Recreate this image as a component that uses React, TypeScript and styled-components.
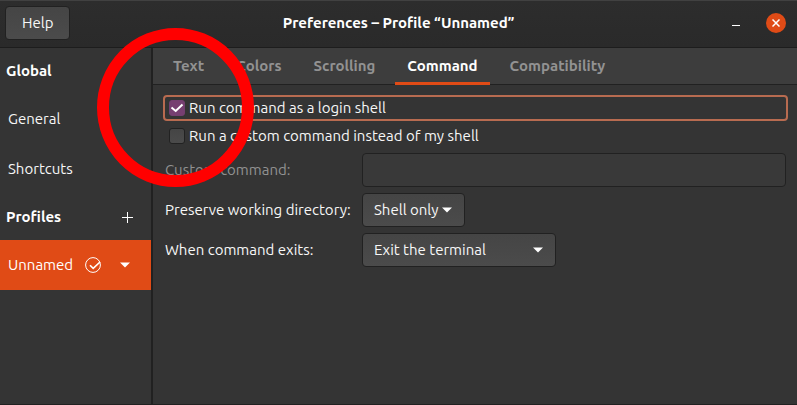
import React, { useState } from "react";
import styled, { createGlobalStyle, css } from "styled-components";

const GlobalStyle = createGlobalStyle`
  *, *::before, *::after { box-sizing: border-box; }
  html, body, #root { height: 100%; }
  body { margin: 0; background: #343434; }
  button, input, select { font: inherit; color: inherit; margin: 0; }
`;

const orange = "#e04b16";
const edge = "#212121";

const Window = styled.div`
  position: relative;
  display: flex;
  flex-direction: column;
  min-height: 100%;
  overflow: hidden;
  color: #f7f7f7;
  background: #343434;
  border-bottom: 1px solid ${edge};
  font: 15px/20px Ubuntu, "Noto Sans", sans-serif;
  white-space: nowrap;
`;

const TitleBar = styled.header`
  display: grid;
  grid-template-columns: 1fr auto 1fr;
  align-items: center;
  height: 48px;
  padding: 0 5px 2px;
  background: linear-gradient(#2d2d2d, #2a2a2a);
  border-top: 1px solid #414141;
  border-bottom: 1px solid #1d1d1d;
`;

const HelpButton = styled.button`
  justify-self: start;
  height: 34px;
  padding: 0 16px;
  border: 1px solid ${edge};
  border-radius: 4px;
  background: linear-gradient(#454545, #4b4b4b);
`;

const Title = styled.h1`
  margin: 0;
  font-size: 15px;
  font-weight: 700;
  color: #ffffff;
`;

const WindowControls = styled.div`
  display: flex;
  justify-content: flex-end;
  align-items: center;
  gap: 20px;
  padding-right: 6px;
`;

const IconButton = styled.button`
  display: grid;
  place-items: center;
  width: 20px;
  height: 20px;
  padding: 0;
  border: 0;
  background: none;
`;

const CloseButton = styled(IconButton)`
  border-radius: 50%;
  background: ${orange};
`;

const Body = styled.div`
  display: flex;
  flex: 1;
`;

const Sidebar = styled.nav`
  flex: none;
  width: 153px;
  border-right: 2px solid ${edge};
`;

const GroupTitle = styled.h2`
  display: flex;
  align-items: center;
  justify-content: space-between;
  height: 46px;
  margin: 0;
  padding: 0 14px 0 6px;
  font-size: 15px;
  font-weight: 700;
  color: #ffffff;
`;

const SidebarRow = styled.div<{ $selected?: boolean }>`
  display: flex;
  align-items: center;
  height: 50px;
  padding: 0 16px 0 8px;
  ${(p) => p.$selected && css`
    background: ${orange};
    color: #ffffff;
  `}
`;

const SidebarLink = styled.a`
  flex: 1;
  color: inherit;
  text-decoration: none;
`;

const RowIcons = styled.span`
  display: flex;
  align-items: center;
  gap: 14px;
`;

const Main = styled.main`
  flex: 1;
  min-width: 0;
`;

const TabBar = styled.div`
  display: flex;
  gap: 8px;
  height: 37px;
  padding-left: 8px;
  background: #3d3d3d;
  border-bottom: 1px solid ${edge};
`;

const Tab = styled.button<{ $active: boolean }>`
  height: 37px;
  padding: 2px 12px 0;
  border: 0;
  border-bottom: 3px solid ${(p) => (p.$active ? orange : "transparent")};
  background: none;
  font-weight: 700;
  color: ${(p) => (p.$active ? "#ffffff" : "#929292")};
`;

const Panel = styled.form`
  padding: 10px 9px;
`;

const CheckRow = styled.label<{ $focused?: boolean }>`
  display: flex;
  align-items: center;
  gap: 4px;
  height: 26px;
  padding: 0 4px;
  margin: 0 0 2px 1px;
  border: 2px solid ${(p) => (p.$focused ? "#b86b50" : "transparent")};
  border-radius: 4px;
`;

const CheckBox = styled.input`
  appearance: none;
  width: 16px;
  height: 16px;
  border: 1px solid #222222;
  border-radius: 3px;
  background: linear-gradient(#454545, #4b4b4b);
  &:checked {
    border-color: #733f6f;
    background: #763f71;
  }
  &:focus { outline: none; }
`;

const CheckHolder = styled.span`
  display: grid;
  > * { grid-area: 1 / 1; place-self: center; }
  svg { pointer-events: none; }
`;

const Fields = styled.div`
  display: grid;
  grid-template-columns: 185px 1fr;
  align-items: center;
  gap: 6px 12px;
  padding: 2px 2px 0 3px;
`;

const FieldLabel = styled.label<{ $disabled?: boolean }>`
  color: ${(p) => (p.$disabled ? "#919191" : "inherit")};
`;

const TextField = styled.input`
  width: 100%;
  height: 34px;
  padding: 0 8px;
  border: 1px solid ${edge};
  border-radius: 4px;
  background: #393939;
`;

const SelectHolder = styled.span<{ $wide?: boolean }>`
  display: grid;
  align-items: center;
  justify-self: start;
  width: ${(p) => (p.$wide ? "194px" : "103px")};
  > * { grid-area: 1 / 1; }
  svg { justify-self: end; margin-right: 13px; pointer-events: none; }
`;

const Select = styled.select`
  appearance: none;
  width: 100%;
  height: 34px;
  padding: 0 11px;
  border: 1px solid ${edge};
  border-radius: 4px;
  background: linear-gradient(#454545, #4b4b4b);
`;

const Marker = styled.svg`
  position: absolute;
  left: 97px;
  top: 28px;
  pointer-events: none;
`;

const Caret = () => (
  <svg width="10" height="6" viewBox="0 0 10 6" aria-hidden="true">
    <path d="M0 .5h10L5 5.5z" fill="#fff" />
  </svg>
);

function Check({ label, initial, focused }: { label: string; initial: boolean; focused?: boolean }) {
  const [on, setOn] = useState(initial);
  return (
    <CheckRow $focused={focused}>
      <CheckHolder>
        <CheckBox type="checkbox" checked={on} onChange={() => setOn(!on)} />
        {on && (
          <svg width="16" height="16" viewBox="0 0 16 16" aria-hidden="true">
            <path d="M2.5 7.5l4.2 3.5L13.5 4.5" fill="none" stroke="#fff" strokeWidth="2" />
          </svg>
        )}
      </CheckHolder>
      {label}
    </CheckRow>
  );
}

const tabs = ["Text", "Colors", "Scrolling", "Command", "Compatibility"];

export default function App() {
  const [active, setActive] = useState("Command");
  return (
    <>
      <GlobalStyle />
      <Window>
        <TitleBar>
          <HelpButton>Help</HelpButton>
          <Title>Preferences – Profile “Unnamed”</Title>
          <WindowControls>
            <IconButton aria-label="Minimize">
              <svg width="8" height="8" viewBox="0 0 8 8">
                <path d="M0 6.5h8" stroke="#fff" />
              </svg>
            </IconButton>
            <CloseButton aria-label="Close">
              <svg width="8" height="8" viewBox="0 0 8 8">
                <path d="M.5.5l7 7M7.5.5l-7 7" stroke="#fff" strokeWidth="1.5" />
              </svg>
            </CloseButton>
          </WindowControls>
        </TitleBar>
        <Body>
          <Sidebar>
            <GroupTitle>Global</GroupTitle>
            <SidebarRow><SidebarLink href="#general">General</SidebarLink></SidebarRow>
            <SidebarRow><SidebarLink href="#shortcuts">Shortcuts</SidebarLink></SidebarRow>
            <GroupTitle>
              Profiles
              <IconButton aria-label="Add profile">
                <svg width="12" height="12" viewBox="0 0 12 12">
                  <path d="M6.5 1v11M1 6.5h11" stroke="#fff" />
                </svg>
              </IconButton>
            </GroupTitle>
            <SidebarRow $selected>
              <SidebarLink href="#unnamed">Unnamed</SidebarLink>
              <RowIcons>
                <svg width="16" height="16" viewBox="0 0 16 16" aria-label="Default profile">
                  <circle cx="8" cy="8" r="7.4" fill="none" stroke="#fff" />
                  <path d="M5 8.2l3.2 3.2L15 5" fill="none" stroke="#fff" strokeWidth="1.6" />
                </svg>
                <IconButton aria-label="Profile menu"><Caret /></IconButton>
              </RowIcons>
            </SidebarRow>
          </Sidebar>
          <Main>
            <TabBar role="tablist">
              {tabs.map((t) => (
                <Tab key={t} role="tab" aria-selected={t === active} $active={t === active} onClick={() => setActive(t)}>
                  {t}
                </Tab>
              ))}
            </TabBar>
            <Panel>
              <Check label="Run command as a login shell" initial focused />
              <Check label="Run a custom command instead of my shell" initial={false} />
              <Fields>
                <FieldLabel htmlFor="custom" $disabled>Custom command:</FieldLabel>
                <TextField id="custom" disabled />
                <FieldLabel htmlFor="preserve">Preserve working directory:</FieldLabel>
                <SelectHolder>
                  <Select id="preserve"><option>Shell only</option></Select>
                  <Caret />
                </SelectHolder>
                <FieldLabel htmlFor="exits">When command exits:</FieldLabel>
                <SelectHolder $wide>
                  <Select id="exits"><option>Exit the terminal</option></Select>
                  <Caret />
                </SelectHolder>
              </Fields>
            </Panel>
          </Main>
        </Body>
        <Marker width="157" height="159" viewBox="0 0 157 159" aria-hidden="true">
          <ellipse cx="78.5" cy="79.5" rx="72.5" ry="73.5" fill="none" stroke="#ff0000" strokeWidth="12" />
        </Marker>
      </Window>
    </>
  );
}
